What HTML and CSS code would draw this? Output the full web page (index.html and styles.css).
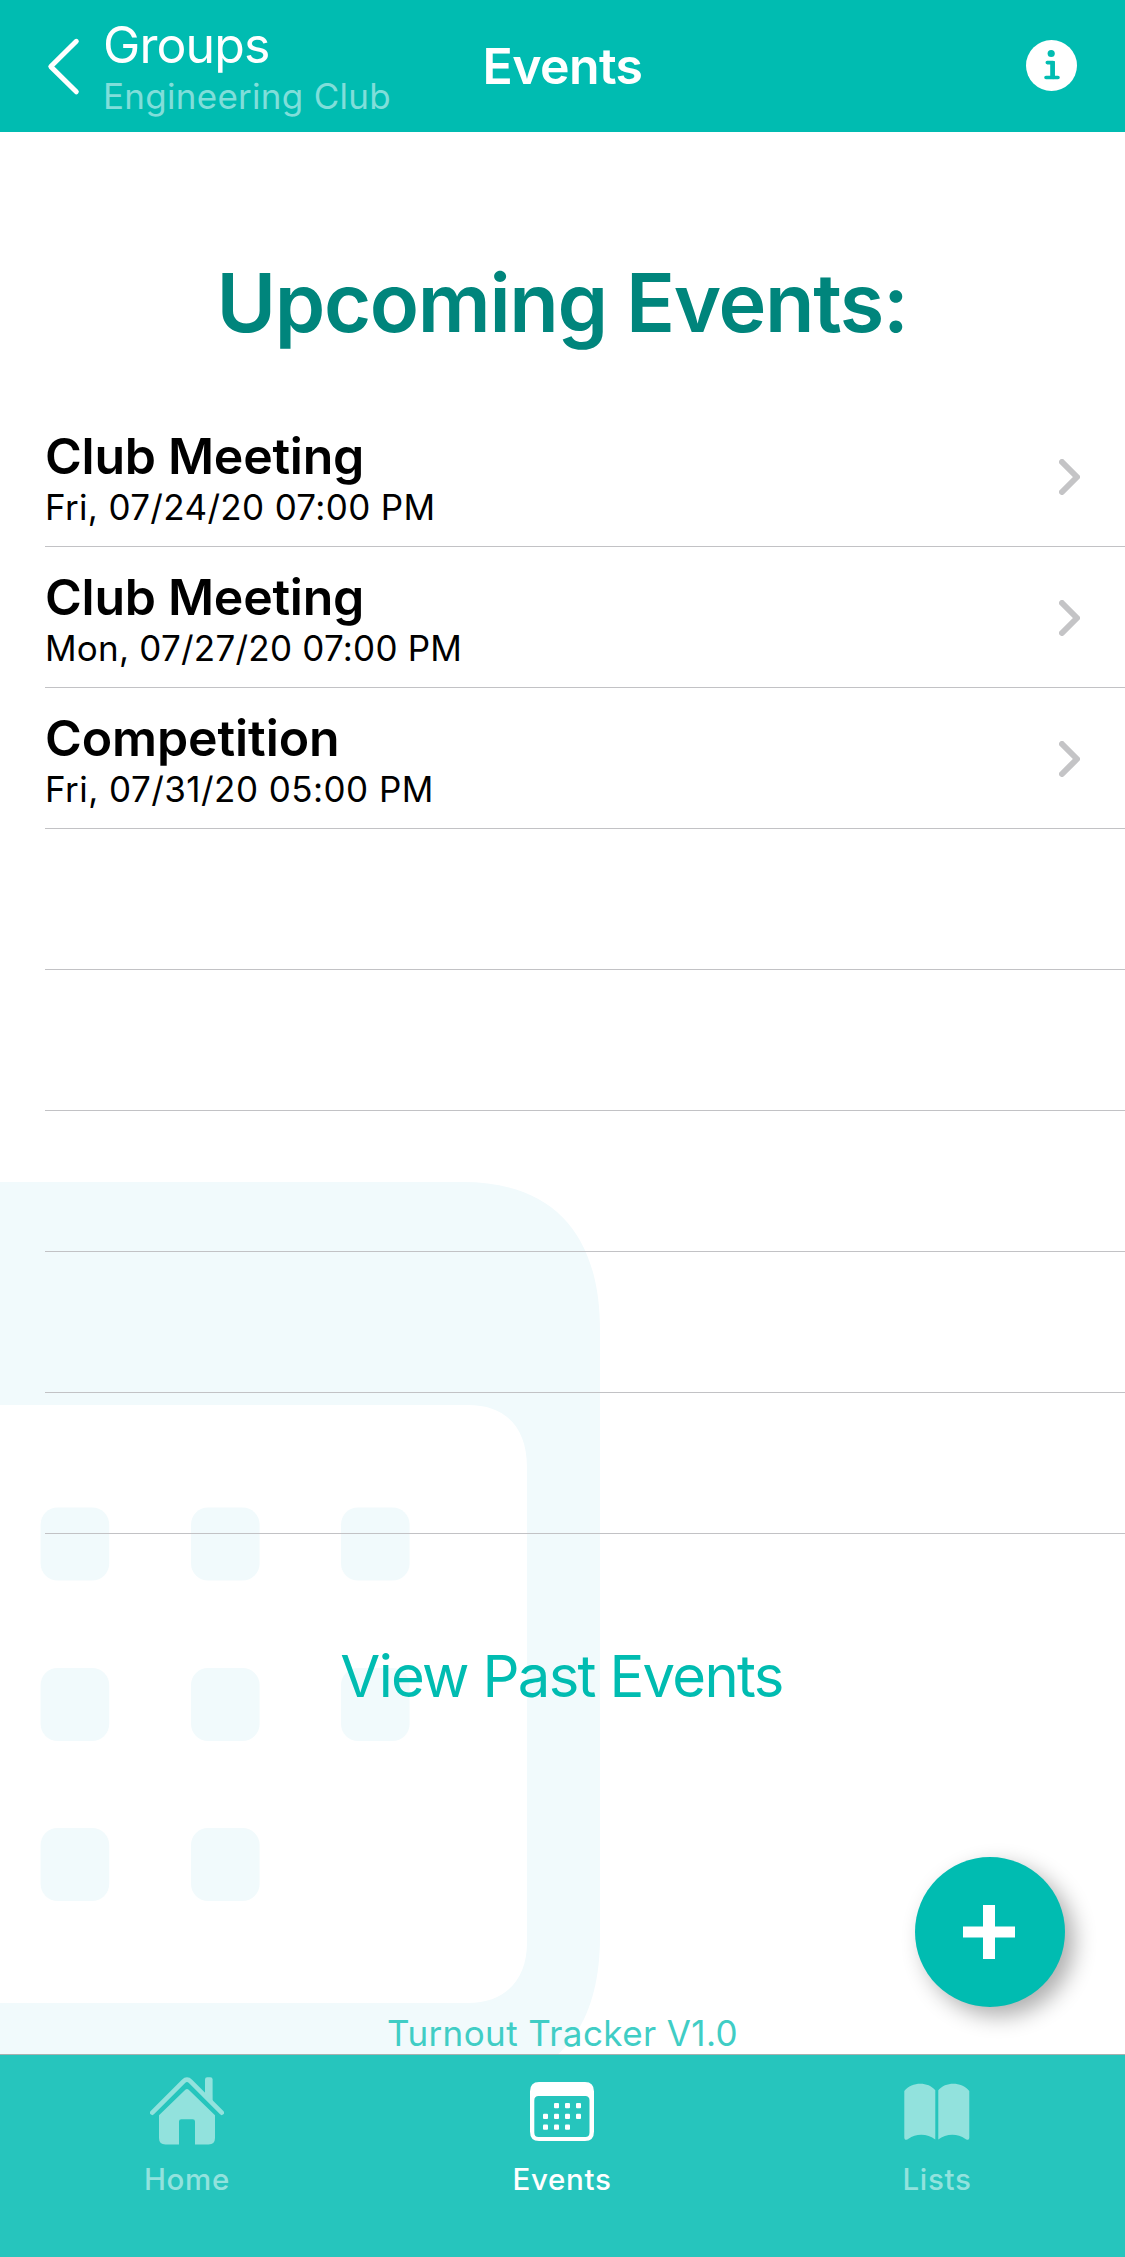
FILE: index.html
```
<!DOCTYPE html>
<html lang="en">
<head>
<meta charset="utf-8">
<title>Events</title>
<link rel="stylesheet" href="styles.css">
</head>
<body>
<div class="screen">
  <header class="navbar">
    <a class="back">
      <svg class="back-icon" width="35" height="60" viewBox="0 0 35 60"><path d="M31.300 4.300 5.800 29.600 31.300 54.800" fill="none" stroke="#fff" stroke-width="5" stroke-linecap="round" stroke-linejoin="round"/></svg>
      <span class="back-text">
        <span class="back-title">Groups</span>
        <span class="back-subtitle">Engineering Club</span>
      </span>
    </a>
    <h1 class="navbar-title">Events</h1>
    <svg class="info-icon" width="51" height="51" viewBox="0 0 51 51">
      <circle cx="25.500" cy="25.500" r="25.500" fill="#fff"/>
      <circle cx="25.200" cy="13.500" r="3.600" fill="#00bcb1"/>
      <path d="M21.300 22.600h5.800v15M20 37.500h12" fill="none" stroke="#00bcb1" stroke-width="3.600" stroke-linecap="round" stroke-linejoin="round"/>
      <path d="M24.200 21h4.500v17h-4.500z" fill="#00bcb1"/>
    </svg>
  </header>

  <main class="content">
    <svg class="watermark" width="600" height="922" viewBox="0 0 600 922">
      <path fill-rule="evenodd" fill="#f1fafc" d="M0 0H463C555 0 600 54 600 148V755C600 849 555 903 463 903H0ZM0 223V821H468C506 821 527 797 527 761V285C527 246 506 223 468 223Z"/>
      <g fill="#f1fafc">
        <rect x="40.600" y="325.500" width="68.600" height="73" rx="17"/>
        <rect x="191" y="325.500" width="68.600" height="73" rx="17"/>
        <rect x="341" y="325.500" width="68.600" height="73" rx="17"/>
        <rect x="40.600" y="486" width="68.600" height="73" rx="17"/>
        <rect x="191" y="486" width="68.600" height="73" rx="17"/>
        <rect x="341" y="486" width="68.600" height="73" rx="17"/>
        <rect x="40.600" y="646" width="68.600" height="73" rx="17"/>
        <rect x="191" y="646" width="68.600" height="73" rx="17"/>
      </g>
    </svg>

    <h2 class="heading">Upcoming Events:</h2>

    <ul class="events">
      <li class="event">
        <div class="event-text"><span class="event-name">Club Meeting</span><span class="event-date date-a">Fri, 07/24/20 07:00 PM</span></div>
        <svg class="chevron" width="21" height="36" viewBox="0 0 21 36"><path d="M3 3 18 18 3 33" fill="none" stroke="#c4c4c6" stroke-width="6" stroke-linecap="round" stroke-linejoin="round"/></svg>
      </li>
      <li class="event">
        <div class="event-text"><span class="event-name">Club Meeting</span><span class="event-date date-b">Mon, 07/27/20 07:00 PM</span></div>
        <svg class="chevron" width="21" height="36" viewBox="0 0 21 36"><path d="M3 3 18 18 3 33" fill="none" stroke="#c4c4c6" stroke-width="6" stroke-linecap="round" stroke-linejoin="round"/></svg>
      </li>
      <li class="event">
        <div class="event-text"><span class="event-name name-wide">Competition</span><span class="event-date date-c">Fri, 07/31/20 05:00 PM</span></div>
        <svg class="chevron" width="21" height="36" viewBox="0 0 21 36"><path d="M3 3 18 18 3 33" fill="none" stroke="#c4c4c6" stroke-width="6" stroke-linecap="round" stroke-linejoin="round"/></svg>
      </li>
      <li class="event"></li>
      <li class="event"></li>
      <li class="event"></li>
      <li class="event"></li>
      <li class="event"></li>
    </ul>

    <a class="past-link">View Past Events</a>
    <p class="version">Turnout Tracker V1.0</p>

    <button class="fab" aria-label="Add event">
      <svg width="52" height="54" viewBox="0 0 52 54"><path d="M20 0h12v21.500h20v11H32V54H20V32.500H0v-11h20z" fill="#fff"/></svg>
    </button>
  </main>

  <nav class="tabbar">
    <a class="tab">
      <svg class="tab-icon" width="74" height="68" viewBox="0 0 74 68" fill="#92e2dd">
        <path d="M2.300 35.700 33.500 4.300Q37 .8 40.500 4.300L71.700 35.700" fill="none" stroke="#92e2dd" stroke-width="4.600" stroke-linecap="round"/>
        <path d="M55 2.500Q55 .3 57.200.3h3.200Q62.600.3 62.600 2.500V25L55 17.500z"/>
        <path d="M35.300 12.800Q37 11.200 38.700 12.800L65 38.300V61q0 6.500-6.500 6.500H45V44.500q0-2.300-2.300-2.300H31.300q-2.300 0-2.300 2.300v23H15.500Q9 67.500 9 61V38.300z"/>
      </svg>
      <span class="tab-label">Home</span>
    </a>
    <a class="tab tab-active">
      <svg class="tab-icon" width="64" height="68" viewBox="0 0 64 68" fill="#fff">
        <path fill-rule="evenodd" d="M9 5H55Q64 5 64 14.500V54.500Q64 64 55 64H9Q0 64 0 54.500V14.500Q0 5 9 5ZM8.500 19Q4.300 19 4.300 23.500V55.500Q4.300 60 8.500 60H55.300Q59.500 60 59.500 55.500V23.500Q59.500 19 55.300 19Z"/>
        <g>
          <rect x="24" y="26" width="5" height="5.300" rx="1"/><rect x="35" y="26" width="5" height="5.300" rx="1"/><rect x="46" y="26" width="5" height="5.300" rx="1"/>
          <rect x="13" y="36.700" width="5" height="5.300" rx="1"/><rect x="24" y="36.700" width="5" height="5.300" rx="1"/><rect x="35" y="36.700" width="5" height="5.300" rx="1"/><rect x="46" y="36.700" width="5" height="5.300" rx="1"/>
          <rect x="13" y="47.400" width="5" height="5.300" rx="1"/><rect x="24" y="47.400" width="5" height="5.300" rx="1"/><rect x="35" y="47.400" width="5" height="5.300" rx="1"/>
        </g>
      </svg>
      <span class="tab-label">Events</span>
    </a>
    <a class="tab">
      <svg class="tab-icon" width="66" height="68" viewBox="0 0 66 68" fill="#92e2dd">
        <path d="M.3 14C8 4.500 24 4.500 31.300 13.200V62.500C24 56.500 12 56 4.500 61.800 2.500 63.600.3 63 .3 60.500Z"/>
        <path d="M65.300 14C57.600 4.500 41.600 4.500 34.300 13.200V62.500C41.600 56.500 53.600 56 61.100 61.800 63.100 63.600 65.300 63 65.300 60.500Z"/>
      </svg>
      <span class="tab-label">Lists</span>
    </a>
  </nav>
</div>
</body>
</html>
```
FILE: styles.css
```
* {
  box-sizing: border-box;
}

body {
  margin: 0;
  background: #fff;
  font-family: Inter, "Liberation Sans", sans-serif;
}

h1, h2, p, ul {
  margin: 0;
  padding: 0;
}

.screen {
  display: flex;
  flex-direction: column;
  width: 1125px;
  height: 2257px;
  overflow: hidden;
}

.navbar {
  display: grid;
  grid-template-columns: 1fr auto 1fr;
  align-items: center;
  height: 132px;
  padding: 0 48px 0 45px;
  background: #00bcb1;
  color: #fff;
}

.back {
  display: flex;
  align-items: center;
  gap: 23px;
  padding-top: 2px;
}

.back-text {
  display: flex;
  flex-direction: column;
  gap: 4px;
}

.back-title {
  font-size: 50px;
  line-height: 54px;
  letter-spacing: -0.9px;
}

.back-subtitle {
  font-size: 35px;
  line-height: 40px;
  letter-spacing: 0.28px;
  color: #80deda;
  white-space: nowrap;
}

.navbar-title {
  padding-left: 3px;
  font-size: 50px;
  font-weight: 600;
  letter-spacing: -0.6px;
}

.info-icon {
  justify-self: end;
  margin-bottom: 2px;
}

.content {
  position: relative;
  display: flex;
  flex: 1;
  flex-direction: column;
}

.watermark {
  position: absolute;
  left: 0;
  bottom: -50px;
  z-index: -1;
}

.heading {
  padding: 123px 1px 55px 0;
  color: #00857c;
  font-size: 81px;
  font-weight: 600;
  line-height: 96px;
  letter-spacing: -1.32px;
  text-align: center;
}

.events {
  list-style: none;
  padding-left: 45px;
}

.event {
  display: flex;
  justify-content: space-between;
  height: 141px;
  padding-right: 45px;
  border-bottom: 1px solid #c2c2c5;
}

.event-text {
  display: flex;
  flex-direction: column;
  gap: 2px;
  padding-top: 21px;
}

.event-name {
  font-size: 50px;
  font-weight: 600;
  line-height: 58px;
  letter-spacing: -0.27px;
}

.name-wide {
  letter-spacing: -0.1px;
}

.event-date {
  font-size: 35px;
  line-height: 40px;
}

.date-a {
  letter-spacing: 0.34px;
}

.date-b {
  letter-spacing: 0.23px;
}

.date-c {
  letter-spacing: 0.46px;
}

.chevron {
  margin-top: 53px;
}

.past-link {
  margin-top: 107px;
  padding-right: 2px;
  color: #00bcb1;
  font-size: 58px;
  line-height: 70px;
  letter-spacing: -1.7px;
  text-align: center;
}

.version {
  margin-top: auto;
  margin-bottom: 1px;
  color: #40cdc5;
  font-size: 35px;
  line-height: 40px;
  letter-spacing: 0.4px;
  text-align: center;
}

.fab {
  position: absolute;
  right: 60px;
  bottom: 47px;
  display: flex;
  align-items: center;
  justify-content: center;
  width: 150px;
  height: 150px;
  padding: 0 2px 0 0;
  border: 0;
  border-radius: 50%;
  background: #00bcb1;
  box-shadow: 9px 9px 22px rgba(0, 0, 0, 0.32);
}

.tabbar {
  position: relative;
  display: grid;
  grid-template-columns: repeat(3, 375px);
  height: 203px;
  border-top: 1px solid #a7b0af;
  background: #26c5bd;
}

.tab {
  display: flex;
  flex-direction: column;
  align-items: center;
  gap: 16px;
  padding: 22px 1px 0 0;
  color: #92e2dd;
}

.tab-active {
  color: #fff;
}

.tab-label {
  font-size: 29.5px;
  font-weight: 500;
  line-height: 36px;
  letter-spacing: 0.7px;
}
```
